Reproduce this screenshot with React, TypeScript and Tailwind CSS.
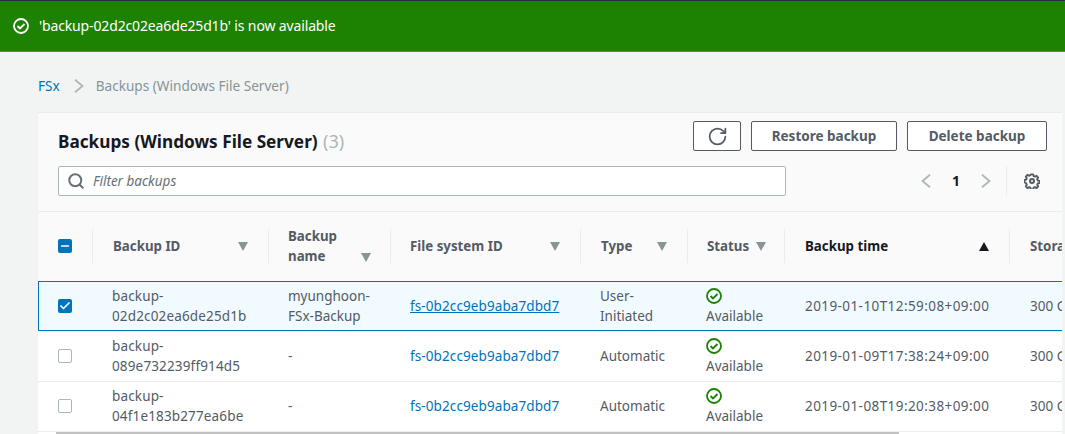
import { Check, RotateCw, Search, Minus } from "lucide-react";

const columns = "grid grid-cols-[55px_176px_122px_190px_107px_97px_225px_60px]";

const rows = [
  { id: "02d2c02ea6de25d1b", name: ["myunghoon-", "FSx-Backup"], type: ["User-", "Initiated"], time: "2019-01-10T12:59:08+09:00", selected: true },
  { id: "089e732239ff914d5", name: ["-"], type: ["Automatic"], time: "2019-01-09T17:38:24+09:00", selected: false },
  { id: "04f1e183b277ea6be", name: ["-"], type: ["Automatic"], time: "2019-01-08T19:20:38+09:00", selected: false },
];

function StatusIcon({ size = 16, color = "#1d8102" }: { size?: number; color?: string }) {
  return (
    <svg width={size} height={size} viewBox="0 0 16 16" fill="none" stroke={color} strokeWidth="1.8">
      <circle cx="8" cy="8" r="7" />
      <path d="M4.5 8l2.5 2.5 4.5-4.5" />
    </svg>
  );
}

function Chevron({ left }: { left?: boolean }) {
  return (
    <svg width="10" height="14" viewBox="0 0 10 14" fill="none" stroke="#aab7b8" strokeWidth="1.8">
      <path d={left ? "M9 .7 L1.5 7 L9 13.3" : "M1 .7 L8.5 7 L1 13.3"} />
    </svg>
  );
}

function Gear() {
  return (
    <svg width="16" height="16" viewBox="0 0 16 16" fill="none" stroke="#545b64" strokeWidth="2">
      <circle cx="8" cy="8" r="2" />
      <path d="M6.7 1h2.6l.4 1.9 1.4.6 1.7-1 1.7 1.9-1 1.6.5 1.4 1.9.4v2.4l-1.9.4-.5 1.4 1 1.6-1.7 1.9-1.7-1-1.4.6-.4 1.9H6.7l-.4-1.9-1.4-.6-1.7 1-1.7-1.9 1-1.6-.5-1.4L.1 9.2V6.8L2 6.4l.5-1.4-1-1.6 1.7-1.9 1.7 1 1.4-.6z" transform="translate(.4 .4) scale(.95)" strokeLinejoin="round" />
    </svg>
  );
}

function SortDown() {
  return <div className="w-0 h-0 border-x-[5.5px] border-x-transparent border-t-[9px] border-t-[#879596]" />;
}

function HeaderCell({ children, active, last }: { children: React.ReactNode; active?: boolean; last?: boolean }) {
  return (
    <div className={`h-[34px] pl-[19px] pr-5 flex items-center justify-between ${last ? "" : "border-r border-[#eaeded]"} ${active ? "text-[#16191f]" : "text-[#545b64]"} text-[13.3px] font-bold whitespace-nowrap`}>
      {children}
    </div>
  );
}

export default function App() {
  return (
    <div className="w-[1065px] h-[434px] overflow-hidden bg-[#f2f3f3] text-[13.5px] leading-[20px] text-[#545b64] font-['Noto_Sans',sans-serif]">
      {/* Flash */}
      <div className="h-[52px] border-t border-[#232f3e] border-b border-b-[#6b7780] bg-[#1d8102] text-white flex items-center pl-[13px] gap-[10px]">
        <StatusIcon color="#ffffff" />
        <span className="text-[14px] tracking-[-0.14px]">'backup-02d2c02ea6de25d1b' is now available</span>
      </div>

      {/* Breadcrumb */}
      <div className="h-[60px] pl-[38px] flex items-center pt-[8px] text-[13.6px]">
        <span className="text-[#0073bb]">FSx</span>
        <span className="ml-[14px] mr-[12px]"><Chevron /></span>
        <span className="text-[#879596]">Backups (Windows File Server)</span>
      </div>

      {/* Card */}
      <div className="ml-[38px] w-[1024px] bg-[#fafafa] border-t border-[#eaeded] overflow-hidden">
        <div className="h-[99px] border-b border-[#eaeded] px-5">
          <div className="flex items-start justify-between pt-[8px]">
            <div className="text-[17.2px] leading-[24px] font-bold text-[#16191f] mt-[8px]">
              Backups (Windows File Server) <span className="text-[18px] ml-[1px] font-normal text-[#aab7b8]">(3)</span>
            </div>
            <div className="flex gap-[10px] -mr-[5px]">
              <button className="w-[48px] h-[30px] border border-[#545b64] rounded-[2px] bg-white flex items-center justify-center">
                <RotateCw size={21} strokeWidth={2} className="text-[#545b64]" />
              </button>
              <button className="w-[146px] h-[30px] border border-[#545b64] rounded-[2px] bg-white font-bold">Restore backup</button>
              <button className="w-[140px] h-[30px] border border-[#545b64] rounded-[2px] bg-white font-bold">Delete backup</button>
            </div>
          </div>
          <div className="flex items-center mt-[12px]">
            <div className="w-[728px] h-[30px] border border-[#aab7b8] rounded-[2px] bg-white flex items-center pl-[8px] gap-[8px]">
              <Search size={18} strokeWidth={2.6} className="text-[#687078]" />
              <span className="italic text-[#687078] text-[13.5px]">Filter backups</span>
            </div>
            <div className="ml-[135px] flex items-center">
              <Chevron left />
              <span className="w-[50px] text-center text-[14px] font-bold text-[#16191f]">1</span>
              <Chevron />
              <div className="h-[30px] border-l border-[#eaeded] ml-[15px] pl-[17px] flex items-center">
                <Gear />
              </div>
            </div>
          </div>
        </div>

        {/* Table */}
        <div className={`${columns} h-[69px] items-center pb-[1px]`}>
          <div className="h-[34px] pl-5 border-r border-[#eaeded] flex items-center">
            <div className="w-[14px] h-[14px] rounded-[2px] bg-[#0073bb] flex items-center justify-center -mt-[1px]">
              <Minus size={12} strokeWidth={3} className="text-white" />
            </div>
          </div>
          <HeaderCell><span className="ml-[1px]">Backup ID</span> <SortDown /></HeaderCell>
          <HeaderCell>
            <span className="leading-[20px] whitespace-normal w-[50px]">Backup name</span>
            <span className="self-end -mr-[1px] mb-[1px]"><SortDown /></span>
          </HeaderCell>
          <HeaderCell>File system ID <SortDown /></HeaderCell>
          <HeaderCell><span className="ml-[1px]">Type</span> <SortDown /></HeaderCell>
          <HeaderCell><span className="flex items-center gap-[7px]">Status <SortDown /></span></HeaderCell>
          <HeaderCell active>
            <span className="ml-[1px]">Backup time</span>
            <div className="w-0 h-0 border-x-[5.5px] border-x-transparent border-b-[9px] border-b-[#16191f]" />
          </HeaderCell>
          <HeaderCell last><span className="ml-[1px]">Storage</span></HeaderCell>
        </div>

        {rows.map((row) => (
          <div
            key={row.id}
            className={`${columns} h-[50px] items-center border-t ${row.selected ? "bg-[#f1faff] border-[#0073bb] border-b shadow-[inset_1px_0_0_#0073bb]" : "bg-white border-[#eaeded] pb-[1px]"}`}
          >
            <div className="pl-5">
              {row.selected ? (
                <div className="w-[14px] h-[14px] rounded-[2px] bg-[#0073bb] flex items-center justify-center">
                  <Check size={12} strokeWidth={3.5} className="text-white" />
                </div>
              ) : (
                <div className="w-[14px] h-[14px] rounded-[2px] border border-[#aab7b8] bg-white" />
              )}
            </div>
            <div className="pl-[19px] tracking-[0.15px]">backup-<br />{row.id}</div>
            <div className="pl-[19px]">{row.name.map((n) => <div key={n}>{n}</div>)}</div>
            <div className="pl-[19px] tracking-[0.1px]">
              <span className={`text-[#0073bb] ${row.selected ? "underline" : ""}`}>fs-0b2cc9eb9aba7dbd7</span>
            </div>
            <div className="pl-[19px]">{row.type.map((t) => <div key={t}>{t}</div>)}</div>
            <div className="pl-[18px]">
              <div className="h-5 flex items-center"><StatusIcon /></div>
              <div className="text-[13.5px]">Available</div>
            </div>
            <div className="pl-5 tracking-[0.42px] whitespace-nowrap">{row.time}</div>
            <div className="pl-5 whitespace-nowrap">300 GiB</div>
          </div>
        ))}
        <div className="h-[3px] bg-white border-t border-[#eaeded]">
          <div className="ml-[18px] w-[843px] h-[3px] bg-[#c1c1c1]" />
        </div>
      </div>
    </div>
  );
}
